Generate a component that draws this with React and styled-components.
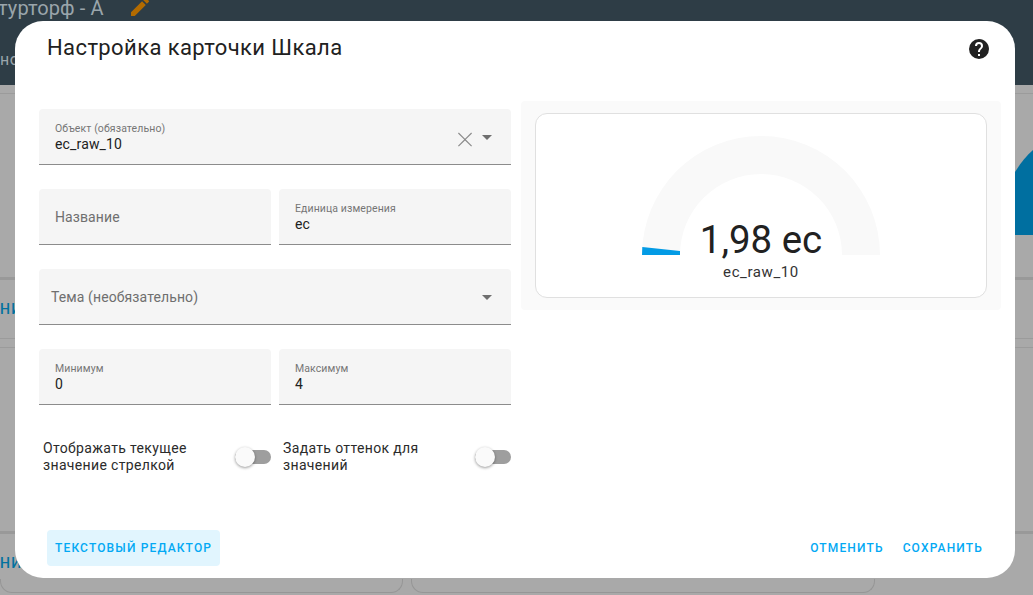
import styled, { createGlobalStyle } from "styled-components"

const Global = createGlobalStyle`
    html, body {
        margin:0;
        padding:0;
    }
    body {
        font-family:Roboto, "Liberation Sans", sans-serif;
        color:#212121;
    }
`
const Page = styled.div`
    position:relative;
    width:1033px;
    height:595px;
    overflow:hidden;
    background:#a9a9a9;
`
const Header = styled.div`
    height:85px;
    margin-bottom:8px;
    background:#2e3d46;
    color:#9aa5ab;
`
const HeaderTitle = styled.div`
    display:flex;
    align-items:flex-start;
    gap:24px;
    height:48px;
    margin-left:-2px;
    font-size:20px;
    line-height:17px;
    letter-spacing:.1px;
`
const HeaderTab = styled.div`
    font-size:16px;
    line-height:24px;
    letter-spacing:.4px;
`
const BackSection = styled.div`
    display:flex;
    justify-content:flex-end;
    align-items:flex-end;
    height:${props => props.$height}px;
    border-top:${props => props.$thick ? 3 : 1}px solid ${props => props.$thick ? "#999" : "#9b9b9b"};
    box-sizing:border-box;
`
const BackLink = styled.div`
    flex:1;
    align-self:center;
    font-size:14px;
    font-weight:500;
    letter-spacing:1.2px;
    color:#02719f;
`
const BackCards = styled.div`
    display:flex;
    gap:8px;
    height:14px;
    margin-top:-13px;
`
const BackCard = styled.div`
    width:${props => props.$width}px;
    box-sizing:border-box;
    border:1px solid #969696;
    border-top:none;
    border-radius:0 0 12px 12px;
`
const Dialog = styled.div`
    position:absolute;
    left:15px;
    top:21px;
    width:1000px;
    height:557px;
    box-sizing:border-box;
    display:flex;
    flex-direction:column;
    background:#fff;
    border-radius:28px;
`
const TitleBar = styled.div`
    display:flex;
    justify-content:space-between;
    align-items:center;
    height:56px;
    padding:0 24px 0 32px;
`
const Title = styled.h2`
    margin:0 0 2px;
    font-size:22px;
    font-weight:400;
    line-height:52px;
    letter-spacing:.4px;
`
const Body = styled.div`
    flex:1;
    display:flex;
    gap:10px;
    padding:24px 14px 0 24px;
`
const Form = styled.div`
    width:472px;
    padding-top:8px;
    display:flex;
    flex-direction:column;
    gap:24px;
`
const Row = styled.div`
    display:grid;
    grid-template-columns:232px 232px;
    gap:8px;
`
const Field = styled.div`
    height:56px;
    box-sizing:border-box;
    display:flex;
    align-items:center;
    padding:0 16px;
    background:#f5f5f5;
    border-bottom:1px solid #8c8c8c;
    border-radius:4px 4px 0 0;
`
const FieldText = styled.div`
    flex:1;
    display:flex;
    flex-direction:column;
    min-width:0;
    padding-top:${props => props.$filled ? 1 : 0}px;
`
const FloatLabel = styled.div`
    font-size:10.5px;
    line-height:15px;
    letter-spacing:.1px;
    color:#757575;
`
const Value = styled.div`
    font-size:14px;
    line-height:17px;
    letter-spacing:.15px;
    color:#212121;
`
const Placeholder = styled.div`
    font-size:14px;
    line-height:20px;
    letter-spacing:.1px;
    color:#6f6f6f;
    margin-left:${props => props.$shift || 0}px;
`
const IconBtn = styled.span`
    display:flex;
    margin-top:${props => props.$top || 0}px;
    margin-right:${props => props.$right || 0}px;
`
const SwitchRow = styled.div`
    display:flex;
    gap:12px;
    padding:11px 0 0 4px;
`
const SwitchField = styled.div`
    flex:1;
    display:flex;
    align-items:center;
    justify-content:space-between;
`
const SwitchLabel = styled.div`
    width:180px;
    font-size:14px;
    line-height:17px;
    letter-spacing:.35px;
    color:#2b2b2b;
`
const Track = styled.div`
    position:relative;
    width:36px;
    height:14px;
    background:#9e9e9e;
    border-radius:7px;
`
const Thumb = styled.div`
    position:absolute;
    left:0;
    top:-3px;
    width:20px;
    height:20px;
    background:#fafafa;
    border-radius:50%;
    box-shadow:0 1px 3px rgba(0,0,0,.4);
`
const Preview = styled.div`
    width:480px;
    height:209px;
    box-sizing:border-box;
    padding:12px 14px;
    background:#fafafa;
    border-radius:4px;
`
const Card = styled.div`
    height:185px;
    box-sizing:border-box;
    display:flex;
    flex-direction:column;
    align-items:center;
    background:#fff;
    border:1px solid #e0e0e0;
    border-radius:12px;
`
const Gauge = styled.div`
    position:relative;
    width:240px;
    height:120px;
    margin-top:22px;
`
const GaugeValue = styled.div`
    position:absolute;
    left:0;
    right:0;
    bottom:-8px;
    text-align:center;
    font-size:38.4px;
    line-height:48px;
    color:#212121;
`
const GaugeName = styled.div`
    margin-top:7px;
    font-size:15px;
    line-height:18px;
    letter-spacing:.6px;
    color:#333;
`
const Footer = styled.div`
    display:flex;
    align-items:center;
    height:36px;
    padding:0 24px 12px 32px;
`
const TextBtn = styled.button`
    height:36px;
    padding:0 8px;
    margin-left:${props => props.$left || 0}px;
    background:${props => props.$tonal ? "#e1f5fe" : "transparent"};
    border:none;
    border-radius:4px;
    font-family:Roboto, "Liberation Sans", sans-serif;
    font-size:12px;
    font-weight:500;
    letter-spacing:1.15px;
    color:#03a9f4;
`
const Spacer = styled.div`
    flex:1;
`

const Pencil = () => (
    <svg width="24" height="24" viewBox="0 0 24 24" style={{marginTop:-5}}>
        <path fill="#b36b00" d="M20.71 7.04c.39-.39.39-1.04 0-1.41l-2.34-2.34c-.37-.39-1.02-.39-1.41 0l-1.84 1.83 3.75 3.75M3 17.25V21h3.75L17.81 9.93l-3.75-3.75L3 17.25z"/>
    </svg>
)
const Help = () => (
    <svg width="24" height="24" viewBox="0 0 24 24">
        <path fill="#212121" d="M15.07 11.25l-.9.92C13.45 12.89 13 13.5 13 15h-2v-.5c0-1.11.45-2.11 1.17-2.83l1.24-1.26c.37-.36.59-.86.59-1.41a2 2 0 0 0-2-2 2 2 0 0 0-2 2H8a4 4 0 0 1 4-4 4 4 0 0 1 4 4c0 .88-.36 1.67-.93 2.25M13 19h-2v-2h2M12 2A10 10 0 0 0 2 12a10 10 0 0 0 10 10 10 10 0 0 0 10-10c0-5.53-4.5-10-10-10z"/>
    </svg>
)
const Clear = () => (
    <svg width="24" height="24" viewBox="0 0 24 24">
        <path fill="#8a8a8a" d="M19 6.41L18.2 5.6 12 11.8 5.8 5.6 5 6.41 11.2 12.6 5 18.8 5.8 19.6 12 13.4 18.2 19.6 19 18.8 12.8 12.6z"/>
    </svg>
)
const Caret = () => (
    <svg width="10" height="5" viewBox="0 0 10 5">
        <path fill="#6f6f6f" d="M0 0h10L5 5z"/>
    </svg>
)

const App = () => {
    return (
        <Page>
            <Global/>
            <Header>
                <HeaderTitle>
                    <span>турторф - А</span>
                    <Pencil/>
                </HeaderTitle>
                <HeaderTab>но</HeaderTab>
            </Header>
            <BackSection $height={184}>
                <svg width="18" height="85" viewBox="0 0 18 85" style={{marginBottom:42}}>
                    <path fill="#006fa0" d="M0 22C5 14 11 6 18 0v85H0z"/>
                </svg>
            </BackSection>
            <BackSection $height={61} $thick>
                <BackLink>НИ</BackLink>
            </BackSection>
            <BackSection $height={9}/>
            <BackSection $height={184}/>
            <BackSection $height={61} $thick>
                <BackLink>НИ</BackLink>
            </BackSection>
            <BackCards>
                <BackCard $width={403}/>
                <BackCard $width={464}/>
            </BackCards>
            <Dialog>
                <TitleBar>
                    <Title>Настройка карточки Шкала</Title>
                    <Help/>
                </TitleBar>
                <Body>
                    <Form>
                        <Field>
                            <FieldText $filled>
                                <FloatLabel>Объект (обязательно)</FloatLabel>
                                <Value>ec_raw_10</Value>
                            </FieldText>
                            <IconBtn $top={4} $right={5}><Clear/></IconBtn>
                            <IconBtn $top={2} $right={3}><Caret/></IconBtn>
                        </Field>
                        <Row>
                            <Field>
                                <FieldText><Placeholder>Название</Placeholder></FieldText>
                            </Field>
                            <Field>
                                <FieldText $filled>
                                    <FloatLabel>Единица измерения</FloatLabel>
                                    <Value>ec</Value>
                                </FieldText>
                            </Field>
                        </Row>
                        <Field>
                            <FieldText><Placeholder $shift={-4}>Тема (необязательно)</Placeholder></FieldText>
                            <IconBtn $top={1} $right={3}><Caret/></IconBtn>
                        </Field>
                        <Row>
                            <Field>
                                <FieldText $filled>
                                    <FloatLabel>Минимум</FloatLabel>
                                    <Value>0</Value>
                                </FieldText>
                            </Field>
                            <Field>
                                <FieldText $filled>
                                    <FloatLabel>Максимум</FloatLabel>
                                    <Value>4</Value>
                                </FieldText>
                            </Field>
                        </Row>
                        <SwitchRow>
                            <SwitchField>
                                <SwitchLabel>Отображать текущее значение стрелкой</SwitchLabel>
                                <Track><Thumb/></Track>
                            </SwitchField>
                            <SwitchField>
                                <SwitchLabel>Задать оттенок для значений</SwitchLabel>
                                <Track><Thumb/></Track>
                            </SwitchField>
                        </SwitchRow>
                    </Form>
                    <Preview>
                        <Card>
                            <Gauge>
                                <svg width="240" height="120" viewBox="0 0 240 120">
                                    <path fill="#f9f9f9" d="M1 119A119 119 0 0 1 239 119H201A81 81 0 0 0 39 119z"/>
                                    <path fill="#039be5" d="M1 119L1.3 111 39 115V119z"/>
                                </svg>
                                <GaugeValue>1,98 ec</GaugeValue>
                            </Gauge>
                            <GaugeName>ec_raw_10</GaugeName>
                        </Card>
                    </Preview>
                </Body>
                <Footer>
                    <TextBtn $tonal>ТЕКСТОВЫЙ РЕДАКТОР</TextBtn>
                    <Spacer/>
                    <TextBtn>ОТМЕНИТЬ</TextBtn>
                    <TextBtn $left={3}>СОХРАНИТЬ</TextBtn>
                </Footer>
            </Dialog>
        </Page>
    )
}

export default App
